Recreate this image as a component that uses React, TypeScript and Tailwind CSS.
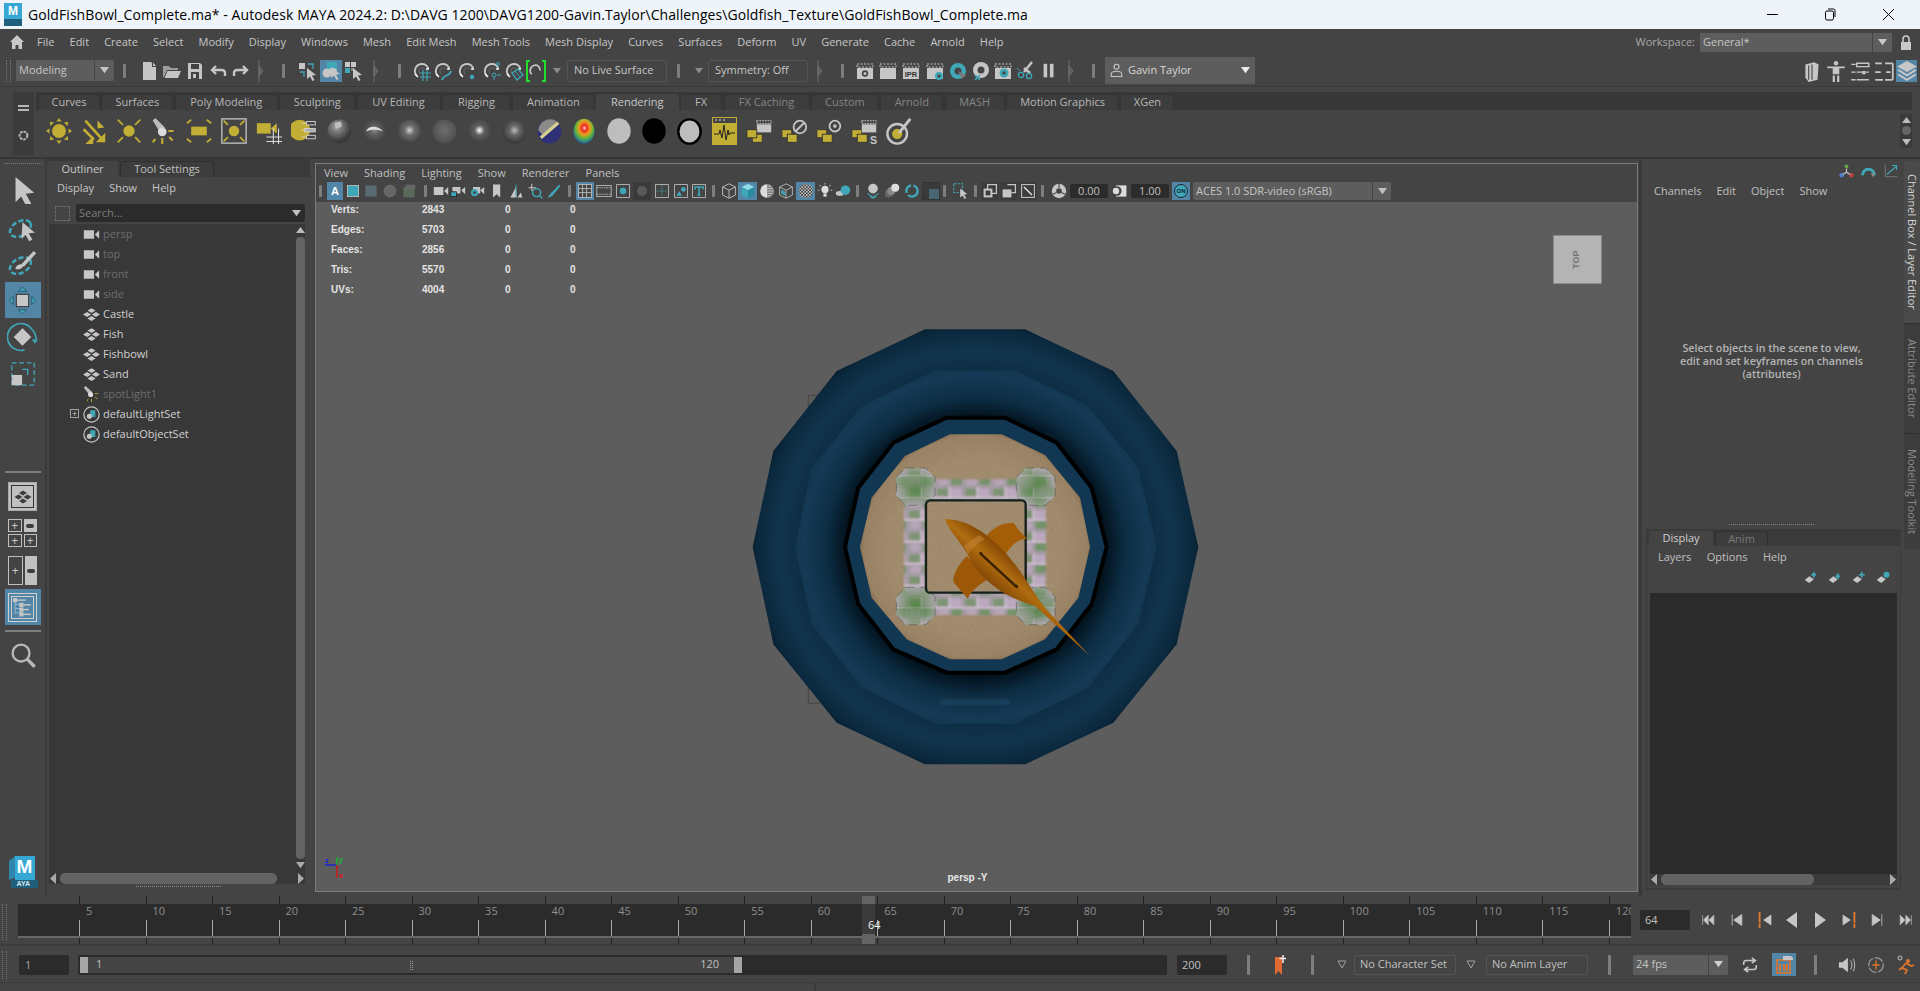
import React from "react";

const G = "#c6c6c6", T = "#3fa7b8", Y = "#c2ae35", D = "#444444";

function I({ s = 18, w, h, vb = "0 0 20 20", children }: { s?: number; w?: number; h?: number; vb?: string; children?: React.ReactNode }) {
  return <svg width={w ?? s} height={h ?? s} viewBox={vb} className="block shrink-0">{children}</svg>;
}
function Slot({ className = "", children }: { className?: string; children?: React.ReactNode }) {
  return <div className={`flex items-center justify-center shrink-0 h-full ${className}`}>{children}</div>;
}
function Handle({ h = "h-[14px]" }: { h?: string }) {
  return <div className={`w-[3px] ${h} bg-[#7e7e7e] rounded-[1px]`} />;
}
function Tri() {
  return <svg width="6" height="22" viewBox="0 0 6 22"><path d="M1 0 V22 M1 6 L5 11 L1 16Z" stroke="#6e6e6e" fill="#5e5e5e" strokeWidth="1" /></svg>;
}
function Down({ c = G, s = 9 }: { c?: string; s?: number }) {
  return <svg width={s} height={s * 0.7} viewBox="0 0 10 7" className="block shrink-0"><path d="M0 0H10L5 7Z" fill={c} /></svg>;
}
function Grip({ className = "" }: { className?: string }) {
  return <div className={`w-[5px] border-l border-r border-dotted border-[#777] ${className}`} />;
}

/* ---------- top toolbar icons ---------- */
const NewFile = () => <I s={20}><path d="M4 1h8l1 1v4h4v13H4z" fill={G} /><path d="M14 1.5 17 5h-3z" fill={G} /></I>;
const OpenFolder = () => <I s={20}><path d="M1 5h6l2 2h7v2H5L2 16H1z" fill="#9c9c9c" /><path d="M5.5 10H19l-3 7H2.5z" fill={G} /></I>;
const Save = () => <I s={20}><path d="M3 2h12l2 2v14H3z" fill={G} /><rect x="6" y="3" width="8" height="5" fill={D} /><rect x="6" y="11" width="8" height="7" fill={D} /><rect x="8" y="13" width="3" height="4" fill={G} /></I>;
const Undo = () => <I s={20}><path d="M17 15v-3a3 3 0 0 0-3-3H4M8 5 4 9l4 4" stroke={G} strokeWidth="2.4" fill="none" /></I>;
const Redo = () => <I s={20}><path d="M3 15v-3a3 3 0 0 1 3-3h10M12 5l4 4-4 4" stroke={G} strokeWidth="2.4" fill="none" /></I>;
const Arrow = ({ x = 8, y = 6, c = G }: { x?: number; y?: number; c?: string }) => <path transform={`translate(${x} ${y})`} d="M0 0 9 7 5 7.5 7.5 12 5.5 13 3 8.5 0 11Z" fill={c} />;
const SelHier = () => <I s={20}><rect x="1" y="2" width="6" height="6" fill={G} /><path d="M10 3h5v5M2 11h4v5" stroke={T} strokeWidth="1.3" fill="none" /><Arrow x={9} y={7} /></I>;
const SelObj = () => <I s={20}><rect x="6" y="1" width="10" height="9" fill={T} /><circle cx="6" cy="12" r="4.5" fill={G} /><circle cx="12" cy="11" r="4" fill={G} /><Arrow x={10} y={6} /></I>;
const SelComp = () => <I s={20}><rect x="1" y="1" width="5" height="5" fill={G} /><rect x="7" y="1" width="5" height="5" fill={G} /><rect x="1" y="7" width="5" height="5" fill={T} /><rect x="7" y="7" width="3" height="3" fill="#888" /><Arrow x={9} y={7} /></I>;
const Magnet = ({ children }: { children?: React.ReactNode }) => <I s={20}><path d="M5 15C1 11 3 4 9 3c4-.5 7 2 7 5" stroke={G} strokeWidth="1.900" fill="none" /><path d="M8 13C6 10 7 7 10 7c2 0 3 1 3 2" stroke="#6a6a6a" strokeWidth="1" fill="none" /><path d="M3 13l3 3M14 8h3" stroke="#eee" strokeWidth="1.5" />{children}</I>;
const SnapGrid = () => <Magnet><path d="M8 12h11M8 16h11M11 9v11M15 9v11" stroke={T} strokeWidth="1.2" /></Magnet>;
const SnapCurve = () => <Magnet><path d="M9 19c1-6 8-3 9-9" stroke={T} strokeWidth="1.8" fill="none" /></Magnet>;
const SnapPoint = () => <Magnet><circle cx="15" cy="16" r="2.2" fill={T} /></Magnet>;
const SnapView = () => <Magnet><circle cx="16" cy="3" r="1.5" fill="none" stroke={T} /><circle cx="12" cy="14" r="2" fill="none" stroke={T} /><path d="M15 14h4M12 16v3" stroke={T} /></Magnet>;
const SnapPlane = () => <Magnet><path d="M8 12l6-4 5 6-6 5z" fill="none" stroke={T} strokeWidth="1.3" /><path d="M11 10l5 6" stroke={T} /></Magnet>;
const SnapLive = () => <div className="relative w-[20px] h-[22px] flex items-center justify-center">
  <div className="absolute left-0 top-0 bottom-0 w-[4px] border-l-2 border-t-2 border-b-2 border-[#22e02a]" />
  <div className="absolute right-0 top-0 bottom-0 w-[4px] border-r-2 border-t-2 border-b-2 border-[#22e02a]" />
  <I s={15}><path d="M5 15C1 11 3 4 9 3c4-.5 7 2 7 7" stroke={G} strokeWidth="2.2" fill="none" /></I>
</div>;
const Clap = ({ children }: { children?: React.ReactNode }) => <I s={20}><rect x="2" y="3" width="16" height="3" fill="none" stroke={G} strokeDasharray="2 1.5" /><rect x="2" y="7" width="16" height="11" fill={G} />{children}</I>;
const Rec = () => <Clap><circle cx="10" cy="12.5" r="3.2" fill={D} /><circle cx="10" cy="12.5" r="1.5" fill={G} /></Clap>;
const Render2 = () => <Clap />;
const IPR = () => <Clap><text x="10" y="16" textAnchor="middle" fontSize="7.5" fontWeight="700" fill="#333" fontFamily="Liberation Sans">IPR</text></Clap>;
const RenderGear = () => <Clap><circle cx="14" cy="15" r="4" fill={T} /><circle cx="14" cy="15" r="1.5" fill={D} /></Clap>;
const Hyper = () => <I s={20}><circle cx="10" cy="10" r="8" fill={T} /><circle cx="10" cy="10" r="3.5" fill={D} /><path d="M10 10 18 14 14 18Z" fill="#777" /></I>;
const Disc = () => <I s={20}><circle cx="10" cy="9" r="8" fill={G} /><circle cx="10" cy="9" r="3.5" fill={D} /><path d="M4 14l5 5M9 14l-5 5" stroke={T} strokeWidth="1.7" /></I>;
const ClapGear = () => <Clap><circle cx="11" cy="12" r="4.5" fill={T} /><circle cx="11" cy="12" r="1.7" fill={D} /></Clap>;
const Cut = () => <I s={20}><path d="M16 1 8 11M14 12l-6-5" stroke={G} strokeWidth="2.4" /><circle cx="5" cy="14" r="2.6" fill="none" stroke={T} strokeWidth="1.3" /><circle cx="13" cy="15" r="2.6" fill="none" stroke={T} strokeWidth="1.3" /><path d="M1 7l3 3" stroke={T} /></I>;
const Pause = () => <I s={18}><rect x="4" y="2" width="4" height="15" fill={G} /><rect x="11" y="2" width="4" height="15" fill={G} /></I>;
const User = () => <I s={15}><circle cx="10" cy="5" r="3.3" fill="none" stroke={G} strokeWidth="1.5" /><path d="M3 18v-3c0-3 3-4 7-4s7 1 7 4v3z" fill="none" stroke={G} strokeWidth="1.5" /></I>;
const ModIcon = () => <I s={22}><path d="M4 4l8-2 4 2-1 14-8 2-3-4z" fill={G} /><path d="M7 5v13M10 4v14" stroke={D} strokeWidth="1" /></I>;
const Person = () => <I s={22}><circle cx="10" cy="3" r="2" fill={G} /><path d="M2 6h16v1.6h-5V13h-6V7.6H2zM7 14h2v7H7zM11 14h2v7h-2z" fill={G} /></I>;
const ListA = () => <I s={22}><path d="M7 3h11v3H7zM2 4h4M7 11h5M15 11h3M2 11h4M7 18h11M2 18h4" stroke={G} fill="none" strokeWidth="1.3" /><rect x="12" y="10" width="3" height="3" fill={G} /></I>;
const ListB = () => <I s={22}><path d="M2 3h6M11 3h7M18 3v15M2 11h5M2 18h7M12 11h4M11 18h7" stroke={G} strokeWidth="1.6" fill="none" /></I>;
const Layers = () => <I s={22}><path d="M10 1 19 6 10 11 1 6Z" fill={G} /><path d="M2 9l8 5 8-5M2 13l8 5 8-5" stroke={G} strokeWidth="1.8" fill="none" /></I>;

/* ---------- shelf icons ---------- */
const LightRays = ({ cx = 15, cy = 15, l = 6, r = 8 }: { cx?: number; cy?: number; l?: number; r?: number }) => {
  const d = r + 2;
  return <path d={`M${cx - d} ${cy - d}l${-l} ${-l}M${cx + d} ${cy - d}l${l} ${-l}M${cx - d} ${cy + d}l${-l} ${l}M${cx + d} ${cy + d}l${l} ${l}`} stroke={Y} strokeWidth="2" />;
};
const Sh = ({ children }: { children?: React.ReactNode }) => <I s={26} vb="0 0 30 30">{children}</I>;
const Ambient = () => <Sh><circle cx="15" cy="15" r="8" fill={Y} />{[0, 45, 90, 135, 180, 225, 270, 315].map((a) => <path key={a} d="M15 0l3 4h-6z" fill={Y} transform={`rotate(${a} 15 15)`} />)}</Sh>;
const Direct = () => <Sh><path d="M5 3 24 24M3 13l12 12" stroke={Y} strokeWidth="3" /><path d="M28 28H17l11-11zM19 3v9l8-1z" fill={Y} /><path d="M14 30H5l9-9z" fill={Y} /></Sh>;
const PointL = () => <Sh><circle cx="15" cy="15" r="6.5" fill={Y} /><LightRays l={6} r={5} /></Sh>;
const Spot = () => <Sh><path d="M2 3 5 0 16 11l-6 5z" fill="#bcbcbc" /><circle cx="13" cy="16" r="5" fill="#dcdcdc" /><path d="M20 15h6M13 23v7M5 24l-3 4M21 22l4 4" stroke={Y} strokeWidth="2.4" /></Sh>;
const AreaL = () => <Sh><rect x="6" y="10" width="18" height="10" fill={Y} /><path d="M1 6l5-4M29 6l-5-4M1 24l5 4M29 24l-5 4" stroke={Y} strokeWidth="2" /></Sh>;
const Volume = () => <Sh><rect x="1" y="1" width="28" height="28" fill="none" stroke="#cfcfcf" strokeWidth="1.4" /><circle cx="15" cy="15" r="6" fill={Y} /><LightRays l={5} r={5} /></Sh>;
const CamLight = () => <Sh><rect x="1" y="6" width="16" height="12" fill={Y} /><path d="M17 12 24 6V18Z" fill={Y} /><path d="M12 22h19M12 27h19M20 12v18M26 12v18" stroke="#ddd" strokeWidth="1.2" /></Sh>;
const LightEd = () => <Sh><circle cx="10" cy="14" r="12" fill={Y} /><path d="M12 6h5M12 14h4M12 22h5" stroke="#ddd" /><rect x="18" y="4" width="10" height="4" fill={D} stroke="#ddd" /><rect x="16" y="12" width="12" height="4" fill="#aaa" stroke="#ddd" /><rect x="18" y="20" width="10" height="4" fill={D} stroke="#ddd" /></Sh>;
function Sphere({ id, hi, lo = "#3a3a3a", mid = "#707070", fx = 50, fy = 45, children }: { id: string; hi: string; lo?: string; mid?: string; fx?: number; fy?: number; children?: React.ReactNode }) {
  return <I s={25}><defs><radialGradient id={id} cx={`${fx}%`} cy={`${fy}%`} r="60%"><stop offset="0" stopColor={hi} /><stop offset=".35" stopColor={mid} /><stop offset="1" stopColor={lo} /></radialGradient></defs><circle cx="10" cy="10" r="9.6" fill={`url(#${id})`} />{children}</I>;
}
const HeatMap = () => <I s={26}><defs><radialGradient id="hm" cx="52%" cy="38%" r="62%"><stop offset="0" stopColor="#ffe0d0" /><stop offset=".18" stopColor="#ee2a25" /><stop offset=".45" stopColor="#e8a020" /><stop offset=".68" stopColor="#5cb53a" /><stop offset="1" stopColor="#1a6cb0" /></radialGradient></defs><ellipse cx="10" cy="10" rx="8" ry="9.5" fill="url(#hm)" /></I>;
const Wave = () => <I w={25} h={28} vb="0 0 25 28"><rect x="0" y="0" width="25" height="28" fill={Y} /><rect x="1" y="1" width="23" height="5" fill={D} /><path d="M3 3h2M7 3h2M11 3h2" stroke="#ddd" /><path d="M2 17h5l1-4 2 8 2-13 2 15 2-10 1 5 1-2h5" stroke="#222" fill="none" /></I>;
const Stack = ({ children }: { children?: React.ReactNode }) => <I s={27} vb="0 0 30 30"><rect x="1" y="13" width="11" height="9" fill={Y} stroke="#333" /><rect x="7" y="18" width="11" height="9" fill={Y} stroke="#333" />{children}</I>;
const Batch = () => <Stack><rect x="12" y="3" width="16" height="3" fill="none" stroke={G} strokeDasharray="2 1" /><rect x="12" y="7" width="16" height="9" fill={G} /><rect x="1" y="13" width="11" height="9" fill={Y} stroke="#333" /></Stack>;
const BatchStop = () => <Stack><circle cx="21" cy="10" r="7" fill="none" stroke={G} strokeWidth="2" /><path d="M16 15l10-10" stroke={G} strokeWidth="2" /></Stack>;
const BatchCam = () => <Stack><circle cx="21" cy="9" r="6" fill="none" stroke={G} strokeWidth="2" /><circle cx="21" cy="9" r="2" fill={G} /></Stack>;
const BatchS = () => <Stack><rect x="12" y="3" width="16" height="3" fill="none" stroke={G} strokeDasharray="2 1" /><rect x="12" y="7" width="16" height="9" fill={G} /><text x="25" y="29" fontSize="12" textAnchor="middle" fontWeight="700" fill={G} fontFamily="Liberation Sans">S</text></Stack>;
const PaintTarget = () => <I s={28} vb="0 0 30 30"><circle cx="12" cy="18" r="10.5" fill="none" stroke={G} strokeWidth="2.6" /><circle cx="12" cy="18" r="5.5" fill={Y} /><path d="M14 17 26 2" stroke={G} strokeWidth="3.2" /></I>;

/* ---------- toolbox ---------- */
const Lasso = ({ brush = false }: { brush?: boolean }) => <I s={31} vb="0 0 30 30"><ellipse cx="13" cy="17" rx="11" ry="7" transform="rotate(-30 13 17)" fill="none" stroke={T} strokeWidth="2.4" strokeDasharray="5 2.4" />{brush ? <><path d="M15 17 27 4" stroke={G} strokeWidth="3.4" /><path d="M8 20c1-4 5-5 8-4 0 3-4 6-8 4z" fill={G} /></> : <path d="M15 11l12 10-6 .6 3.5 6-3 1.6-3.5-6-4 4z" fill={G} />}</I>;
const Move = () => <I s={31} vb="0 0 30 30"><rect x="9" y="9" width="12" height="12" fill={G} stroke="#333" /><path d="M15 2l4 4h-8zM15 28l4-4h-8zM2 15l4-4v8zM28 15l-4-4v8z" fill={T} stroke="#234" strokeWidth=".6" /></I>;
const Rotate = () => <I s={31} vb="0 0 30 30"><path d="M24 7A13 13 0 1 0 17 27" fill="none" stroke={T} strokeWidth="1.6" /><path d="M24 7a13 13 0 0 1 4 10" stroke={T} strokeWidth="1.6" fill="none" /><path d="M24 17h6l-3 4z" fill={T} /><path d="M15 6l8.5 8.5L15 23 6.5 14.5z" fill={G} /></I>;
const Scale = () => <I s={28} vb="0 0 30 30"><rect x="3" y="3" width="24" height="24" fill="none" stroke={T} strokeWidth="1.4" strokeDasharray="5 3" /><rect x="3" y="16" width="11" height="11" fill={G} /><path d="M14 10h6v6" stroke={T} strokeWidth="1.5" fill="none" /></I>;
const Dia = ({ x, y, s = 1 }: { x: number; y: number; s?: number }) => <g transform={`translate(${x} ${y}) scale(${s})`} fill="#3c3c3c"><path d="M0-3 5 0 0 3-5 0z" /></g>;
const Diamonds = ({ s = 18, c = G }: { s?: number; c?: string }) => <I s={s}><path d="M10 2.500l4.800 2.800-4.800 2.800-4.800-2.800zM10 11.900l4.800 2.800-4.800 2.800-4.800-2.800zM4.800 7.200l4.800 2.800-4.800 2.800L0 10zM15.200 7.200 20 10l-4.800 2.800-4.800-2.800z" fill={c} /></I>;
const Cam = ({ s = 17 }: { s?: number }) => <I s={s}><rect x="1" y="5" width="12" height="10" fill={G} /><path d="M14 10 19 5v10z" fill={G} /></I>;
const SetIcon = () => <I s={17}><circle cx="10" cy="10" r="9" fill="none" stroke={G} strokeWidth="1.4" /><rect x="8.5" y="5" width="6" height="8" fill={T} /><circle cx="7.5" cy="12" r="3" fill={G} /></I>;
const SpotSm = () => <I s={17}><path d="M1 2 3 0l8 7-3 4z" fill="#bdbdbd" /><circle cx="9" cy="10" r="3" fill="#ddd" /><path d="M14 9h4M10 15v4M6 15l-1 3M14 13l3 2" stroke={Y} strokeWidth="1" /></I>;
const MayaLogo = () => (
  <div className="relative w-[31px] h-[32px]">
    <svg width="31" height="32" viewBox="0 0 31 32" className="absolute inset-0"><path d="M1 5 7 0v22l-6 2z" fill="#2e86ad" /><path d="M7 0H27v24H7z" fill="#37a7d4" /><path d="M3 24H30V32H3z" fill="#1f5f7c" /></svg>
    <span className="absolute left-[9px] top-[1px] text-[19px] leading-[20px] font-bold text-white font-['Liberation_Sans',sans-serif]">M</span>
    <span className="absolute left-[9px] top-[23px] text-[7px] leading-[9px] font-bold text-[#d8e8ee] font-['Liberation_Sans',sans-serif]">AYA</span>
  </div>
);

/* ---------- viewport toolbar ---------- */
const V = ({ children }: { children?: React.ReactNode }) => <I s={16}>{children}</I>;
const Blue = ({ children, className = "" }: { children?: React.ReactNode; className?: string }) => <div className={`h-[18px] flex items-center justify-center bg-[#5285a6] ${className}`}>{children}</div>;
const VCamLock = () => <V><rect x="3" y="5" width="10" height="8" fill={G} /><path d="M14 9l5-4v9z" fill={G} /><rect x="1" y="11" width="7" height="6" fill={T} stroke="#222" /></V>;
const VCamGear = () => <V><rect x="5" y="5" width="9" height="8" fill={G} /><path d="M14 9l5-4v9z" fill={G} /><circle cx="7" cy="12" r="4.5" fill={T} /><circle cx="7" cy="12" r="1.8" fill={D} /></V>;
const VBook = () => <V><path d="M5 2h9v16l-4.500-4L5 18z" fill={G} /></V>;
const VPlane = () => <V><path d="M3 18 10 5l1 13zM12 18l4-6 2 6z" fill={G} /><path d="M10 2v16" stroke={T} strokeWidth="1.2" /></V>;
const VZoom = () => <V><circle cx="12" cy="12" r="5" fill="none" stroke={T} strokeWidth="1.8" /><path d="M16 16l3 3" stroke={T} strokeWidth="2" /><path d="M6 1v9M2 6h9" stroke={G} strokeWidth="1.3" /></V>;
const VBrush = () => <V><path d="M18 2 7 13l-4 5c3 0 6-1 7-3L19 4z" fill={T} /></V>;
const VGrid = () => <V><rect x="2" y="2" width="16" height="16" fill={D} stroke={G} /><path d="M2 7h16M2 12h16M7 2v16M12 2v16" stroke={G} /></V>;
const VFilm = () => <V><rect x="1" y="3" width="18" height="14" fill="none" stroke={G} /><path d="M1 6h18M1 14h18" stroke={G} strokeDasharray="2 1" /></V>;
const VDot = () => <V><rect x="2" y="2" width="16" height="16" fill="none" stroke={G} /><circle cx="10" cy="10" r="4" fill={T} /></V>;
const VCross = () => <V><rect x="2" y="2" width="16" height="16" fill="none" stroke={G} /><path d="M10 3v14M3 10h14" stroke={T} strokeDasharray="2 1.5" /></V>;
const VMount = () => <V><rect x="2" y="2" width="16" height="16" fill="none" stroke={G} /><path d="M4 16l4-6 3 6z" fill={T} /><circle cx="13" cy="8" r="3" fill={T} /></V>;
const VT = () => <V><rect x="2" y="2" width="16" height="16" fill="none" stroke={G} /><path d="M5 8V5h10v3M10 5v10M8 15h4" stroke={T} strokeWidth="2" fill="none" /></V>;
const VWire = () => <V><path d="M10 1 18 5v10l-8 4-8-4V5zM2 5l8 4 8-4M10 9v10" fill="none" stroke={G} strokeWidth="1.1" /></V>;
const VShade = () => <V><path d="M10 1 18 5l-8 4-8-4z" fill="#8fdbe4" /><path d="M2 5l8 4v10l-8-4z" fill={T} /><path d="M18 5l-8 4v10l8-4z" fill="#2a8c9c" /></V>;
const VHalf = () => <V><circle cx="10" cy="10" r="8.500" fill="#dedede" /><path d="M10 1.500a8.500 8.500 0 0 1 0 17z" fill="#777" /><path d="M10 4h5M10 7h7M10 10h8M10 13h7M10 16h5" stroke="#ddd" /></V>;
const VTexCube = () => <V><path d="M10 1 18 5v10l-8 4-8-4V5zM2 5l8 4 8-4M10 9v10" fill="none" stroke={G} /><path d="M4 8l5 3v5l-5-3z" fill={T} /></V>;
const VChecker = () => <V><defs><pattern id="chk" width="4" height="4" patternUnits="userSpaceOnUse"><rect width="4" height="4" fill="#333" /><rect width="2" height="2" fill="#ccc" /><rect x="2" y="2" width="2" height="2" fill="#ccc" /></pattern></defs><circle cx="10" cy="10" r="9" fill="url(#chk)" /></V>;
const VBulb = () => <V><circle cx="10" cy="8" r="4.500" fill="#ddd" /><rect x="8" y="13" width="4" height="4" fill="#ddd" /><path d="M10 0v2M3 3l2 1M17 3l-2 1M1 9h2M17 9h2" stroke="#ddd" /></V>;
const VShadow = () => <V><ellipse cx="6" cy="13" rx="5" ry="3" fill={G} /><circle cx="13" cy="9" r="6" fill={T} /></V>;
const VBall = () => <V><circle cx="10" cy="7" r="6" fill={G} /><path d="M3 13l7 5 7-5M6 17l4 2 4-2" stroke={T} strokeWidth="1.3" fill="none" /></V>;
const VGhost = () => <V><circle cx="6" cy="13" r="5" fill="#666" /><circle cx="9" cy="10" r="5" fill="#888" /><circle cx="14" cy="6" r="5" fill="#ddd" /></V>;
const VRing = () => <V><circle cx="10" cy="10" r="7" fill="none" stroke={T} strokeWidth="3" strokeDasharray="16 3 12 3" /></V>;
const VGhostBox = () => <div className="w-[18px] h-[18px] bg-[#3a3a3a] border border-[#333] flex items-end justify-end"><div className="w-[10px] h-[10px] bg-[#486770]" /></div>;
const VSel = () => <V><rect x="1" y="1" width="11" height="11" fill="none" stroke={T} strokeWidth="1.300" strokeDasharray="3 1.500" /><Arrow x={9} y={7} /></V>;
const VIso = () => <div className="w-[18px] h-[18px] bg-[#3c3c3c] flex items-center justify-center"><V><rect x="7" y="2" width="11" height="11" fill="none" stroke={G} strokeWidth="1.6" /><rect x="2" y="7" width="11" height="11" fill={G} /><rect x="4.500" y="9.500" width="6" height="6" fill="#3c3c3c" /></V></div>;
const VIso2 = () => <div className="w-[18px] h-[18px] bg-[#3c3c3c] flex items-center justify-center"><V><path d="M8 2h10v10h-5" fill="none" stroke={G} strokeWidth="1.600" /><rect x="2" y="8" width="11" height="10" fill={G} /></V></div>;
const VIso3 = () => <div className="w-[18px] h-[18px] bg-[#3c3c3c] flex items-center justify-center"><V><rect x="2" y="2" width="16" height="16" fill="none" stroke={G} strokeWidth="1.300" /><path d="M5 5l10 10" stroke="#ddd" strokeWidth="2" /></V></div>;
const Aperture = () => <V><circle cx="10" cy="10" r="9" fill={G} /><circle cx="10" cy="10" r="3.500" fill={D} /><path d="M10 1v5M2 14l5-2M18 14l-5-2" stroke={D} strokeWidth="1.400" /></V>;
const HalfC = () => <V><rect x="5" y="3" width="13" height="14" fill="#ddd" /><circle cx="6" cy="10" r="6" fill={D} /><circle cx="5" cy="10" r="4" fill="#ddd" /></V>;

function Txt({ className = "", children }: { className?: string; children?: React.ReactNode }) {
  return <span className={`whitespace-nowrap ${className}`}>{children}</span>;
}

const menus = ["File", "Edit", "Create", "Select", "Modify", "Display", "Windows", "Mesh", "Edit Mesh", "Mesh Tools", "Mesh Display", "Curves", "Surfaces", "Deform", "UV", "Generate", "Cache", "Arnold", "Help"];

function TitleBar() {
  return (
    <div className="h-[29px] bg-[#eff4fb] flex items-center shrink-0 text-black">
      <div className="ml-[4px] w-[18px] h-[24px] flex flex-col shrink-0">
        <div className="h-[16px] bg-[#37a7d4] text-white text-[12px] leading-[16px] font-bold text-center font-['Liberation_Sans',sans-serif]">M</div>
        <div className="h-[7px] bg-[#1f5f7c]" />
      </div>
      <span className="ml-[6px] text-[14px] leading-[29px] whitespace-nowrap font-['Open_Sans',sans-serif] tracking-[0.07px]">GoldFishBowl_Complete.ma* - Autodesk MAYA 2024.2: D:\DAVG 1200\DAVG1200-Gavin.Taylor\Challenges\Goldfish_Texture\GoldFishBowl_Complete.ma</span>
      <div className="ml-auto mr-[3px] flex items-center h-full">
        <Slot className="w-[58px]"><div className="w-[11px] h-[1px] bg-black" /></Slot>
        <Slot className="w-[58px]"><svg width="12" height="13" viewBox="0 0 12 13"><rect x="1.500" y="3" width="8" height="9" rx="1.500" fill="none" stroke="#000" /><path d="M4 1h5.500a1.500 1.500 0 0 1 1.500 1.500V9" fill="none" stroke="#000" /></svg></Slot>
        <Slot className="w-[58px]"><svg width="13" height="13" viewBox="0 0 13 13"><path d="M1 1l11 11M12 1 1 12" stroke="#000" /></svg></Slot>
      </div>
    </div>
  );
}

function MenuBar() {
  return (
    <div className="h-[26px] flex items-center shrink-0 relative">
      <Slot className="w-[32px] pl-[2px]"><svg width="16" height="16" viewBox="0 0 16 16"><path d="M8 1 15 8h-2v7H9.500v-4h-3v4H3V8H1z" fill="#c8c8c8" /></svg></Slot>
      <div className="ml-[5px] flex gap-[15.100px] text-[11px] text-[#c6c6c6]">
        {menus.map((m) => <Txt key={m}>{m}</Txt>)}
      </div>
      <div className="ml-auto flex items-center h-full">
        <Txt className="text-[11px] text-[#a8a8a8] mr-[5px]">Workspace:</Txt>
        <div className="w-[172px] h-[19px] bg-[#5d5d5d] flex items-center px-[3px] text-[11px] text-[#c6c6c6]">General*</div>
        <div className="w-[19px] h-[19px] ml-[1px] bg-[#5d5d5d] flex items-center justify-center"><Down c="#c8c8c8" /></div>
        <Slot className="w-[28px]"><svg width="14" height="17" viewBox="0 0 14 17"><path d="M4 8V5a3 3 0 0 1 6 0v3" stroke="#c8c8c8" strokeWidth="1.600" fill="none" /><rect x="2" y="8" width="10" height="8" fill="#c8c8c8" /></svg></Slot>
      </div>
    </div>
  );
}

function Field({ className = "", children }: { className?: string; children?: React.ReactNode }) {
  return <div className={`h-[22px] rounded-[3px] border border-[#555] flex items-center pl-[6px] text-[11px] text-[#c6c6c6] shrink-0 ${className}`}>{children}</div>;
}

function Toolbar() {
  return (
    <div className="h-[32px] flex items-center shrink-0 border-b border-[#3a3a3a]">
      <Grip className="ml-[6px] mr-[3px] h-[22px] w-[3px]" />
      <div className="w-[98px] h-[21px] ml-[2px] bg-[#5d5d5d] rounded-[2px] flex items-center text-[11px] text-[#c6c6c6] shrink-0">
        <span className="pl-[3px] flex-1">Modeling</span>
        <div className="w-[20px] h-full border-l border-[#444] flex items-center justify-center"><Down /></div>
      </div>
      <Slot className="w-[20px]"><Handle /></Slot>
      <div className="w-[3px] shrink-0" />
      {[NewFile, OpenFolder, Save, Undo, Redo].map((C, i) => <Slot key={i} className="w-[23px]"><C /></Slot>)}
      <Slot className="w-[18px]"><Tri /></Slot>
      <Slot className="w-[26px]"><Handle /></Slot>
      <Slot className="w-[23px]"><SelHier /></Slot>
      <Slot className="w-[23px]"><div className="w-[22px] h-[22px] bg-[#5285a6] flex items-center justify-center"><SelObj /></div></Slot>
      <Slot className="w-[23px]"><SelComp /></Slot>
      <Slot className="w-[22px]"><Tri /></Slot>
      <Slot className="w-[24px]"><Handle /></Slot>
      <Slot className="w-[21px]"><SnapGrid /></Slot>
      <Slot className="w-[22px]"><SnapCurve /></Slot>
      <Slot className="w-[26px]"><SnapPoint /></Slot>
      <Slot className="w-[24px]"><SnapView /></Slot>
      <Slot className="w-[20px]"><SnapPlane /></Slot>
      <Slot className="w-[23px]"><SnapLive /></Slot>
      <Slot className="w-[20px]"><Down c="#8a8a8a" s={8} /></Slot>
      <Field className="w-[100px]">No Live Surface</Field>
      <Slot className="w-[22px]"><Handle /></Slot>
      <Slot className="w-[19px]"><Down c="#8a8a8a" s={8} /></Slot>
      <Field className="w-[100px]">Symmetry: Off</Field>
      <Slot className="w-[24px]"><Tri /></Slot>
      <Slot className="w-[20px]"><Handle /></Slot>
      <div className="w-[1px] shrink-0" />
      <Slot className="w-[23px]"><Rec /></Slot>
      <Slot className="w-[23px]"><Render2 /></Slot>
      <Slot className="w-[23px]"><IPR /></Slot>
      <Slot className="w-[25px]"><RenderGear /></Slot>
      <Slot className="w-[22px]"><Hyper /></Slot>
      <Slot className="w-[23px]"><Disc /></Slot>
      <Slot className="w-[22px]"><ClapGear /></Slot>
      <Slot className="w-[24px]"><Cut /></Slot>
      <Slot className="w-[22px]"><Pause /></Slot>
      <Slot className="w-[22px]"><Tri /></Slot>
      <Slot className="w-[22px]"><Handle /></Slot>
      <div className="w-[150px] h-[27px] ml-[1px] bg-[#5d5d5d] flex items-center shrink-0 text-[11px] text-[#d8d8d8]">
        <span className="ml-[4px]"><User /></span>
        <span className="ml-[4px] flex-1">Gavin Taylor</span>
        <span className="mr-[5px]"><Down c="#eee" /></span>
      </div>
      <div className="ml-auto flex items-center h-full mr-[3px]">
        <Slot className="w-[24px]"><ModIcon /></Slot>
        <Slot className="w-[24px]"><Person /></Slot>
        <Slot className="w-[24px]"><ListA /></Slot>
        <Slot className="w-[24px]"><ListB /></Slot>
        <div className="w-[21px] h-[22px] bg-[#5285a6] flex items-center justify-center"><Layers /></div>
      </div>
    </div>
  );
}

const shelfTabs: [string, string, boolean, boolean][] = [
  ["Curves", "w-[62px]", false, false], ["Surfaces", "w-[72px]", false, false], ["Poly Modeling", "w-[103px]", false, false],
  ["Sculpting", "w-[76px]", false, false], ["UV Editing", "w-[84px]", false, false], ["Rigging", "w-[69px]", false, false],
  ["Animation", "w-[82px]", false, false], ["Rendering", "w-[83px]", true, false], ["FX", "w-[42px]", false, false],
  ["FX Caching", "w-[86px]", false, true], ["Custom", "w-[68px]", false, true], ["Arnold", "w-[63px]", false, true],
  ["MASH", "w-[60px]", false, true], ["Motion Graphics", "w-[113px]", false, false], ["XGen", "w-[54px]", false, false],
];

function Shelf() {
  return (
    <div className="h-[72px] flex shrink-0 pt-[5px] pb-[2px] border-b-2 border-[#363636]">
      <div className="ml-[13px] w-[21px] bg-[#3b3b3b] flex flex-col items-center justify-between py-[13px] shrink-0">
        <div className="w-[11px] h-[6px] border-t-2 border-b-2 border-[#b8b8b8]" />
        <I s={13}><circle cx="10" cy="10" r="6" fill="none" stroke="#bbb" strokeWidth="3" strokeDasharray="4 1.500" /></I>
      </div>
      <div className="ml-[2px] flex-1 flex flex-col mr-[8px]">
        <div className="h-[18px] bg-[#373737] flex items-end pl-[2px] gap-[1.400px] shrink-0">
          {shelfTabs.map(([t, w, act, dim]) => (
            <div key={t} className={`h-[16px] ${w} shrink-0 rounded-t-[3px] flex items-center justify-center text-[11px] ${act ? "bg-[#444444] text-[#c8c8c8]" : dim ? "bg-[#3d3d3d] border-t border-l border-r border-[#333] text-[#858585]" : "bg-[#3d3d3d] border-t border-l border-r border-[#333] text-[#b8b8b8]"}`}>{t}</div>
          ))}
        </div>
        <div className="flex-1 flex items-center pl-[5.500px] pb-[3px]">
          {[Ambient, Direct, PointL, Spot, AreaL, Volume, CamLight, LightEd].map((C, i) => <Slot key={i} className="w-[35px]"><C /></Slot>)}
          <Slot className="w-[35px]"><Sphere id="s1" hi="#a8a8a8" mid="#7c7c7c" fx={38} fy={30}><path d="M6 3l5-1 1 4-5 2z" fill="#c0c0c0" /></Sphere></Slot>
          <Slot className="w-[35px]"><Sphere id="s2" hi="#8a8a8a" mid="#5c5c5c"><path d="M3 10c2-5 10-5 14 0-4-2-10-2-14 0z" fill="#ddd" /></Sphere></Slot>
          <Slot className="w-[35px]"><Sphere id="s3" hi="#d0d0d0" mid="#6c6c6c" /></Slot>
          <Slot className="w-[35px]"><Sphere id="s4" hi="#6c6c6c" mid="#626262" lo="#4a4a4a" /></Slot>
          <Slot className="w-[35px]"><Sphere id="s5" hi="#ffffff" mid="#5e5e5e" /></Slot>
          <Slot className="w-[35px]"><Sphere id="s6" hi="#b8b8b8" mid="#666" lo="#2e2e2e" /></Slot>
          <Slot className="w-[35px]"><I s={25}><circle cx="10" cy="10" r="9.500" fill="#2f2f78" /><path d="M1 9a9.500 9.500 0 0 1 15-7L5 13z" fill="#8a8a8a" /><path d="M3 15 17 3" stroke="#d8d090" strokeWidth="2.600" /></I></Slot>
          <Slot className="w-[35px]"><HeatMap /></Slot>
          <Slot className="w-[35px]"><I s={26}><ellipse cx="10" cy="10" rx="9" ry="9.800" fill="#bdbdbd" /></I></Slot>
          <Slot className="w-[35px]"><I s={26}><ellipse cx="10" cy="10" rx="9" ry="9.800" fill="#000" /></I></Slot>
          <Slot className="w-[35px]"><I s={27}><ellipse cx="10" cy="10" rx="8.300" ry="9" fill="#bdbdbd" stroke="#000" strokeWidth="1.800" /></I></Slot>
          <Slot className="w-[35px]"><Wave /></Slot>
          <Slot className="w-[35px]"><Batch /></Slot>
          <Slot className="w-[35px]"><BatchStop /></Slot>
          <Slot className="w-[35px]"><BatchCam /></Slot>
          <Slot className="w-[35px]"><BatchS /></Slot>
          <Slot className="w-[37px]"><PaintTarget /></Slot>
          <div className="ml-auto w-[12px] h-[34px] bg-[#3a3a3a] flex flex-col items-center justify-between py-[3px]">
            <svg width="9" height="6" viewBox="0 0 9 6"><path d="M0 6h9L4.500 0z" fill="#bbb" /></svg>
            <div className="w-[9px] h-[9px] rounded-full bg-[#666]" />
            <Down c="#bbb" />
          </div>
        </div>
      </div>
    </div>
  );
}

function Toolbox() {
  return (
    <div className="w-[45px] shrink-0 flex flex-col items-center relative">
      <div className="h-[3px] w-[38px] mt-[4px] border-t border-dotted border-[#777]" />
      <div className="h-[36px] mt-[6px] flex items-center"><I s={28} vb="0 0 30 30"><path d="M7 1 27 18l-9 1 6 11-5 3-6-11-6 6z" fill={G} /></I></div>
      <div className="h-[37px] flex items-center"><Lasso /></div>
      <div className="h-[37px] flex items-center"><Lasso brush /></div>
      <div className="h-[36px] w-[36px] bg-[#5285a6] flex items-center justify-center"><Move /></div>
      <div className="h-[38px] flex items-center"><Rotate /></div>
      <div className="h-[36px] flex items-center"><Scale /></div>
      <div className="w-[36px] h-[2px] bg-[#7f7f7f] mt-[79px]" />
      <div className="mt-[9px] w-[29px] h-[29px] bg-[#c0c0c0] border border-[#aaa] flex items-center justify-center"><div className="w-[23px] h-[23px] border border-[#333] flex items-center justify-center"><I s={18} vb="-9 -9 18 18"><Dia x={0} y={-4} s={.8} /><Dia x={0} y={4} s={.8} /><Dia x={-4.500} y={0} s={.8} /><Dia x={4.500} y={0} s={.8} /></I></div></div>
      <div className="mt-[8px] grid grid-cols-2 gap-[2px] w-[29px]">
        {[0, 1, 2, 3].map((i) => i === 1 ? <div key={i} className="h-[13px] bg-[#c0c0c0] flex items-center justify-center"><div className="w-[8px] h-[4px] bg-[#3c3c3c] rounded-full" /></div> : <div key={i} className="h-[13px] border border-[#c0c0c0] flex items-center justify-center text-[#c8c8c8] text-[12px] leading-[10px]">+</div>)}
      </div>
      <div className="mt-[9px] flex gap-[2px] w-[29px] h-[29px]">
        <div className="flex-1 border border-[#c0c0c0] flex items-center justify-center text-[#c8c8c8] text-[12px]">+</div>
        <div className="flex-1 bg-[#c0c0c0] flex items-center justify-center"><div className="w-[8px] h-[4px] bg-[#3c3c3c] rounded-full" /></div>
      </div>
      <div className="mt-[4px] w-[36px] h-[36px] bg-[#5285a6] flex items-center justify-center">
        <div className="w-[29px] h-[29px] border border-[#d0d0d0] p-[2px]"><div className="w-full h-full border border-[#d0d0d0]"><I s={21}><path d="M3 4v12M3 7h6M3 11h6M3 15h6" stroke="#8fb2c8" /><rect x="1" y="1" width="4" height="4" fill={G} /><path d="M5 3h8" stroke={G} strokeWidth="1.400" /><rect x="7" y="5.500" width="4" height="4" fill={G} /><path d="M11 7.500h7" stroke={G} strokeWidth="1.400" /><rect x="7" y="10" width="4" height="4" fill={G} /><path d="M11 12h5" stroke={G} strokeWidth="1.400" /><rect x="7" y="14.500" width="4" height="4" fill={G} /><path d="M11 16.500h7" stroke={G} strokeWidth="1.400" /></I></div></div>
      </div>
      <div className="w-[36px] h-[2px] bg-[#7f7f7f] mt-[5px]" />
      <div className="mt-[10px]"><I s={26}><circle cx="8.500" cy="8.500" r="6.500" fill="none" stroke="#b8b8b8" strokeWidth="1.800" /><path d="M13 13l6 6" stroke="#b8b8b8" strokeWidth="2.600" /></I></div>
      <div className="mt-auto mb-[8px] ml-[1px]"><MayaLogo /></div>
    </div>
  );
}

const outl: [string, "cam" | "mesh" | "spot" | "set", boolean, boolean][] = [
  ["persp", "cam", true, false], ["top", "cam", true, false], ["front", "cam", true, false], ["side", "cam", true, false],
  ["Castle", "mesh", false, false], ["Fish", "mesh", false, false], ["Fishbowl", "mesh", false, false], ["Sand", "mesh", false, false],
  ["spotLight1", "spot", true, false], ["defaultLightSet", "set", false, true], ["defaultObjectSet", "set", false, false],
];

function HScroll({ thumb, className = "" }: { thumb: string; className?: string }) {
  return (
    <div className={`h-[11px] flex items-center shrink-0 ${className}`}>
      <svg width="7" height="11" viewBox="0 0 7 11" className="shrink-0 ml-[1px]"><path d="M6 0V11L0 5.500z" fill="#aaa" /></svg>
      <div className={`h-[11px] ml-[3px] rounded-[5px] bg-[#636363] ${thumb}`} />
      <div className="flex-1" />
      <svg width="7" height="11" viewBox="0 0 7 11" className="shrink-0 mr-[1px]"><path d="M1 0V11L7 5.500z" fill="#aaa" /></svg>
    </div>
  );
}

function Outliner() {
  return (
    <div className="w-[265px] shrink-0 flex flex-col border-l-[2px] border-[#3a3a3a] bg-[#444444]">
      <div className="h-[18px] bg-[#3a3a3a] flex items-end gap-[2px] shrink-0 pt-[2px]">
        <div className="w-[71px] h-[16px] bg-[#444444] rounded-t-[3px] flex items-center justify-center text-[11px] text-[#c8c8c8]">Outliner</div>
        <div className="w-[94px] h-[16px] bg-[#3d3d3d] border-t border-l border-r border-[#2f2f2f] rounded-t-[3px] flex items-center justify-center text-[11px] text-[#c0c0c0]">Tool Settings</div>
      </div>
      <div className="h-[22px] flex items-center gap-[15px] pl-[10px] text-[11px] text-[#c6c6c6] shrink-0">
        <span>Display</span><span>Show</span><span>Help</span>
      </div>
      <div className="h-[20px] mt-[4px] flex items-center shrink-0 pl-[8px] pr-[5px]">
        <div className="w-[15px] h-[15px] border border-dashed border-[#6c6c6c]" />
        <div className="ml-[6px] flex-1 h-[18px] bg-[#2b2b2b] rounded-[2px] flex items-center pl-[3px] pr-[4px] text-[11px] text-[#7d7d7d]">
          <span className="flex-1">Search...</span><Down c="#c0c0c0" />
        </div>
      </div>
      <div className="ml-[2px] mr-[5px] mt-[1px] flex-1 bg-[#383838] flex flex-col min-h-0">
        <div className="flex-1 flex min-h-0">
          <div className="flex-1 flex flex-col">
            {outl.map(([n, k, dim, exp]) => (
              <div key={n} className="h-[20px] flex items-center relative shrink-0">
                {exp && <div className="absolute left-[21px] top-[5px] w-[9px] h-[9px] border border-[#a0a0a0] flex items-center justify-center text-[#c0c0c0] text-[9px] leading-[7px]">+</div>}
                <div className="ml-[34px] w-[17px] flex justify-center">{k === "cam" ? <Cam /> : k === "mesh" ? <Diamonds s={17} /> : k === "spot" ? <SpotSm /> : <SetIcon />}</div>
                <span className={`ml-[3px] text-[11px] whitespace-nowrap ${dim ? "text-[#6e6e6e]" : "text-[#d0d0d0]"}`}>{n}</span>
              </div>
            ))}
          </div>
          <div className="w-[9px] flex flex-col items-center shrink-0 pt-[3px] pb-[5px]">
            <svg width="9" height="6" viewBox="0 0 9 6" className="shrink-0"><path d="M0 6h9L4.500 0z" fill="#bbb" /></svg>
            <div className="w-[9px] flex-1 mt-[4px] mb-[3px] rounded-[4px] bg-[#636363]" />
            <Down c="#aaa" />
          </div>
        </div>
        <HScroll thumb="w-[217px]" />
      </div>
      <div className="h-[12px] flex justify-center items-start pt-[2px] shrink-0"><div className="w-[85px] border-t border-dotted border-[#8a8a8a]" /></div>
    </div>
  );
}

function Model() {
  const c1 = "555,55 855,55 1120,180 1310,420 1375,708 1310,1000 1120,1235 855,1360 555,1360 290,1235 100,1000 38,708 100,420 290,180";
  const c2 = "585,178 825,178 1045,285 1195,470 1250,708 1195,940 1045,1130 825,1238 585,1238 365,1130 215,940 165,708 215,470 365,285";
  const c3 = "620,320 795,320 950,395 1055,530 1100,708 1055,880 950,1015 795,1085 620,1085 460,1015 355,880 315,708 355,530 460,395";
  const c4 = "630,370 785,370 915,432 1020,560 1050,708 1015,860 915,985 785,1045 630,1045 500,985 395,860 360,708 395,560 495,435";
  const tower = (x: number, y: number) => `${x - 30},${y - 56} ${x + 30},${y - 56} ${x + 58},${y - 28} ${x + 58},${y + 28} ${x + 30},${y + 56} ${x - 30},${y + 56} ${x - 58},${y + 28} ${x - 58},${y - 28}`;
  const towers: [number, number][] = [[527, 527], [887, 527], [527, 885], [887, 885]];
  return (
    <svg width="470" height="470" viewBox="0 0 1410 1410" className="block">
      <defs>
        <radialGradient id="r1" gradientUnits="userSpaceOnUse" cx="707" cy="708" r="700"><stop offset=".72" stopColor="#0b2a3f" /><stop offset=".84" stopColor="#11344d" /><stop offset=".93" stopColor="#0b293e" /><stop offset="1" stopColor="#021420" /></radialGradient>
        <radialGradient id="r2" gradientUnits="userSpaceOnUse" cx="707" cy="708" r="560"><stop offset=".68" stopColor="#020f18" /><stop offset=".8" stopColor="#0c2d44" /><stop offset=".92" stopColor="#153a55" /><stop offset="1" stopColor="#11344c" /></radialGradient>
        <radialGradient id="sd" gradientUnits="userSpaceOnUse" cx="707" cy="708" r="370"><stop offset=".7" stopColor="#a58f71" /><stop offset=".9" stopColor="#9c8466" /><stop offset="1" stopColor="#6a5339" /></radialGradient>
        <filter id="nz" x="0" y="0" width="100%" height="100%"><feTurbulence type="fractalNoise" baseFrequency=".35" numOctaves="3" seed="4" /><feColorMatrix values="0 0 0 0 .25 0 0 0 0 .18 0 0 0 0 .1 0 0 0 .9 -.3" /><feComposite in2="SourceAlpha" operator="in" result="n" /><feMerge><feMergeNode in="SourceGraphic" /><feMergeNode in="n" /></feMerge></filter>
        <filter id="bl"><feGaussianBlur stdDeviation="2.500" /></filter>
        <pattern id="stone" width="84" height="66" patternUnits="userSpaceOnUse"><rect width="84" height="66" fill="#a49ba3" /><rect x="4" y="5" width="32" height="24" fill="#7d9472" /><rect x="46" y="5" width="30" height="22" fill="#bca8bf" /><rect x="8" y="38" width="28" height="22" fill="#b7a5b8" /><rect x="46" y="36" width="32" height="24" fill="#74936a" /><path d="M0 32h84M41 0v32" stroke="#d9c5db" strokeWidth="5" /></pattern>
        <radialGradient id="mo"><stop offset="0" stopColor="#437c33" /><stop offset=".55" stopColor="#648d58" /><stop offset="1" stopColor="#9ea39a" /></radialGradient>
        <linearGradient id="fb" gradientUnits="userSpaceOnUse" x1="780" y1="700" x2="700" y2="790"><stop offset="0" stopColor="#7f4403" /><stop offset=".45" stopColor="#b06c10" /><stop offset="1" stopColor="#7a4003" /></linearGradient>
      </defs>
      <path d="M240 253H205V290M240 1177H205V1130" stroke="#444" strokeWidth="3" fill="none" />
      <polygon points={c1} fill="url(#r1)" />
      <polygon points={c2} fill="url(#r2)" />
      <polygon points={c3} fill="#123752" stroke="#000" strokeWidth="12" strokeLinejoin="round" />
      <polygon points={c4} fill="url(#sd)" filter="url(#nz)" />
      <path d="M600 1165h210v18H600z" fill="#1f4a66" opacity=".6" filter="url(#bl)" />
      <path fillRule="evenodd" d="M492 505H918V912H492ZM556 570V843H858V570Z" fill="url(#stone)" filter="url(#bl)" />
      {towers.map(([x, y]) => <g key={x * y}><polygon points={tower(x, y)} fill="url(#mo)" /><polygon points={tower(x, y)} fill="url(#stone)" opacity=".35" stroke="#1e241e" strokeWidth="3" strokeDasharray="26 18" /></g>)}
      <rect x="558" y="568" width="299" height="277" rx="12" fill="none" stroke="#15201a" strokeWidth="7" />
      <path d="M740 672C768 642 795 634 822 636 832 655 848 670 861 683 830 683 812 708 795 732Z" fill="#a45e08" />
      <path d="M680 735C652 765 640 790 640 812 655 830 670 848 683 863 695 838 720 820 748 802Z" fill="#9c5806" />
      <path d="M615 625C680 622 755 670 825 760 860 805 880 845 915 890L1050 1035 885 885C800 860 725 815 680 725 655 685 628 660 615 625Z" fill="url(#fb)" />
      <path d="M672 705C690 690 705 680 718 672L735 685C715 695 695 712 684 730Z" fill="#bf8232" opacity=".6" />
      <path d="M722 727 830 827" stroke="#3c2100" strokeWidth="9" strokeLinecap="round" />
      <path d="M728 727 828 820" stroke="#c98a30" strokeWidth="2" />
    </svg>
  );
}

const stats: [string, string][] = [["Verts:", "2843"], ["Edges:", "5703"], ["Faces:", "2856"], ["Tris:", "5570"], ["UVs:", "4004"]];

function Viewport() {
  return (
    <div className="w-[1323px] shrink-0 ml-[5px] mt-[4px] mb-[4px] border border-[#7c7c7c] flex flex-col relative bg-[#444444]">
      <div className="h-[18px] flex items-center pl-[8px] gap-[16px] text-[11px] text-[#c0c0c0] shrink-0">
        {["View", "Shading", "Lighting", "Show", "Renderer", "Panels"].map((m) => <span key={m}>{m}</span>)}
      </div>
      <div className="h-[18px] flex items-center shrink-0 mb-[2px]">
        <Slot className="w-[8px]"><Handle h="h-[12px]" /></Slot>
        <div className="ml-[3px] w-[16px] h-[18px] bg-[#5285a6] flex items-center justify-center text-white text-[11px] font-bold font-['Liberation_Sans',sans-serif]">A</div>
        <Slot className="w-[19px]"><V><rect x="3" y="3" width="14" height="14" fill={T} stroke={G} /></V></Slot>
        <Slot className="w-[18px]"><V><rect x="3" y="3" width="14" height="14" fill="#5a6a72" /></V></Slot>
        <Slot className="w-[20px]"><V><circle cx="10" cy="10" r="8" fill="#666" /></V></Slot>
        <Slot className="w-[18px]"><V><rect x="3" y="5" width="14" height="13" fill="#5a6a5a" /><rect x="6" y="2" width="12" height="6" fill="#666" /></V></Slot>
        <Slot className="w-[14px]"><Handle h="h-[12px]" /></Slot>
        <Slot className="w-[17px]"><Cam s={16} /></Slot>
        <Slot className="w-[18px]"><VCamLock /></Slot>
        <Slot className="w-[20px]"><VCamGear /></Slot>
        <Slot className="w-[20px]"><VBook /></Slot>
        <Slot className="w-[18px]"><VPlane /></Slot>
        <Slot className="w-[19px]"><VZoom /></Slot>
        <Slot className="w-[18px]"><VBrush /></Slot>
        <Slot className="w-[14px]"><Handle h="h-[12px]" /></Slot>
        <Blue className="w-[18px]"><VGrid /></Blue>
        <Slot className="w-[19px]"><VFilm /></Slot>
        <Slot className="w-[19px]"><VDot /></Slot>
        <Slot className="w-[20px]"><div className="w-[18px] h-[18px] bg-[#3a3a3a] flex items-center justify-center"><div className="w-[10px] h-[10px] rounded-full bg-[#5a5a5a]" /></div></Slot>
        <Slot className="w-[19px]"><VCross /></Slot>
        <Slot className="w-[19px]"><VMount /></Slot>
        <Slot className="w-[18px]"><VT /></Slot>
        <Slot className="w-[10px]"><Handle h="h-[12px]" /></Slot>
        <Slot className="w-[18px] ml-[2px]"><VWire /></Slot>
        <Blue className="w-[19px]"><VShade /></Blue>
        <Slot className="w-[19px]"><VHalf /></Slot>
        <Slot className="w-[20px]"><VTexCube /></Slot>
        <Blue className="w-[19px]"><VChecker /></Blue>
        <Slot className="w-[19px]"><VBulb /></Slot>
        <Slot className="w-[18px]"><VShadow /></Slot>
        <Slot className="w-[10px]"><Handle h="h-[12px]" /></Slot>
        <Slot className="w-[18px] ml-[2px]"><VBall /></Slot>
        <Slot className="w-[20px]"><VGhost /></Slot>
        <Slot className="w-[19px]"><VRing /></Slot>
        <Slot className="w-[20px]"><VGhostBox /></Slot>
        <Slot className="w-[6px]"><Handle h="h-[12px]" /></Slot>
        <Slot className="w-[20px] ml-[4px]"><VSel /></Slot>
        <Slot className="w-[8px]"><Handle h="h-[12px]" /></Slot>
        <Slot className="w-[18px] ml-[2px]"><VIso /></Slot>
        <Slot className="w-[18px] ml-[1px]"><VIso2 /></Slot>
        <Slot className="w-[18px] ml-[1px]"><VIso3 /></Slot>
        <Slot className="w-[10px]"><Handle h="h-[12px]" /></Slot>
        <Slot className="w-[18px] ml-[3px]"><Aperture /></Slot>
        <div className="ml-[2px] w-[38px] h-[14px] bg-[#2b2b2b] rounded-[2px] text-[11px] leading-[14px] text-[#c0c0c0] text-center">0.00</div>
        <Slot className="w-[19px] ml-[2px]"><HalfC /></Slot>
        <div className="ml-[2px] w-[38px] h-[14px] bg-[#2b2b2b] rounded-[2px] text-[11px] leading-[14px] text-[#c0c0c0] text-center">1.00</div>
        <div className="ml-[3px] w-[18px] h-[18px] bg-[#5285a6] flex items-center justify-center"><div className="w-[14px] h-[14px] rounded-full bg-[#3fa7b8] border border-[#223] text-[6px] leading-[12px] text-center text-[#123] font-bold font-['Liberation_Sans',sans-serif]">ON</div></div>
        <div className="ml-[3px] w-[198px] h-[18px] bg-[#5d5d5d] rounded-[2px] flex items-center text-[11px] text-[#c6c6c6]">
          <span className="flex-1 pl-[3px] whitespace-nowrap">ACES 1.0 SDR-video (sRGB)</span>
          <div className="w-[19px] h-full border-l border-[#444] flex items-center justify-center"><Down c="#c0c0c0" /></div>
        </div>
      </div>
      <div className="flex-1 bg-[#5d5d5d] relative flex items-center justify-center overflow-hidden pr-[3px] pb-[2px]">
        <Model />
        <div className="absolute left-[15px] top-[2px] font-['Liberation_Sans',sans-serif] font-bold text-[10px] leading-[12px] text-[#e4e4e4]">
          {stats.map(([l, v]) => (
            <div key={l} className="h-[20px] flex items-start">
              <span className="w-[91px]">{l}</span><span className="w-[83px]">{v}</span><span className="w-[65px]">0</span><span>0</span>
            </div>
          ))}
        </div>
        <div className="absolute right-[35px] top-[33px] w-[49px] h-[49px] bg-[#b4b4b4] border border-[#8a8a8a] flex items-center justify-center"><span className="-rotate-90 text-[9px] font-bold text-[#777] font-['Liberation_Sans',sans-serif]">TOP</span></div>
        <div className="absolute bottom-[6px] left-0 right-0 pr-[18px] text-center text-[10px] font-bold text-[#e8e8e8] font-['Liberation_Sans',sans-serif]">persp -Y</div>
        <div className="absolute left-[6px] bottom-[11px] w-[26px] h-[24px]">
          <svg width="26" height="24" viewBox="0 0 26 24"><path d="M3 9H15" stroke="#1020e0" strokeWidth="1.300" /><path d="M15 9V22" stroke="#e01010" strokeWidth="1.300" /><path d="M15 1V9" stroke="#10c030" strokeWidth="1.300" /><text x="3" y="7" fontSize="7" fontWeight="700" fill="#1020e0" fontFamily="Liberation Sans">z</text><text x="17" y="6" fontSize="7" fontWeight="700" fill="#10c030" fontFamily="Liberation Sans">y</text><text x="17" y="22" fontSize="7" fontWeight="700" fill="#e01010" fontFamily="Liberation Sans">x</text></svg>
        </div>
      </div>
    </div>
  );
}

function RightPanel() {
  return (
    <div className="flex-1 flex min-w-0">
      <div className="w-[3px] bg-[#3a3a3a] ml-[1px] shrink-0" />
      <div className="w-[259px] shrink-0 flex flex-col mt-[2px]">
        <div className="h-[20px] flex items-center justify-end gap-[7px] pr-[3px] shrink-0">
          <I s={15}><circle cx="10" cy="3" r="2.500" fill="#6aa84f" /><circle cx="3.500" cy="15" r="3" fill="#4a7fd0" /><circle cx="16.500" cy="15" r="3" fill="#c04040" /><path d="M10 6v5M5 14l5-3 5 3" stroke={G} strokeWidth="1.500" fill="none" /></I>
          <I s={15}><path d="M2 15a8 8 0 1 1 16 0" fill="none" stroke={T} strokeWidth="4" /><path d="M13 12l6 0-3 6z" fill="#888" /></I>
          <I s={15}><path d="M3 1v16h16" stroke="#888" fill="none" /><path d="M5 14 18 3M12 2h6v6" stroke={T} strokeWidth="1.500" fill="none" /></I>
        </div>
        <div className="h-[21px] flex items-center gap-[15px] pl-[12px] text-[11px] text-[#c0c0c0] shrink-0">
          <span>Channels</span><span>Edit</span><span>Object</span><span>Show</span>
        </div>
        <div className="flex-1 flex flex-col items-center justify-center text-[10.700px] leading-[13px] font-semibold text-[#b4b4b4] text-center">
          <span>Select objects in the scene to view,</span>
          <span>edit and set keyframes on channels</span>
          <span>(attributes)</span>
        </div>
        <div className="h-[9px] flex justify-center items-center shrink-0"><div className="w-[85px] border-t border-dotted border-[#888]" /></div>
        <div className="ml-[4px] flex-col flex h-[361px] shrink-0 mb-[6px] border-b-2 border-l border-r border-[#3a3a3a]">
          <div className="h-[17px] bg-[#3a3a3a] flex items-end gap-[2px] pl-[2px] shrink-0">
            <div className="w-[64px] h-[15px] bg-[#444444] rounded-t-[3px] flex items-center justify-center text-[11px] text-[#d0d0d0]">Display</div>
            <div className="w-[53px] h-[15px] bg-[#3d3d3d] border-t border-l border-r border-[#2f2f2f] rounded-t-[3px] flex items-center justify-center text-[11px] text-[#7a7a7a]">Anim</div>
          </div>
          <div className="h-[23px] flex items-center gap-[15.500px] pl-[11px] text-[11px] text-[#c0c0c0] shrink-0">
            <span>Layers</span><span>Options</span><span>Help</span>
          </div>
          <div className="h-[19px] flex items-center justify-end gap-[9px] pr-[9px] shrink-0">
            {["M13 9V3l-3 3M13 3l3 3", "M13 3v6l-3-3M13 9l3-3", "M13 1v8M9 5h8", "dot"].map((d, i) => (
              <I key={i} s={15}><path d="M1 12l6-5 6 4-6 5z" fill={G} />{d === "dot" ? <circle cx="14" cy="5" r="4" fill={T} /> : <path d={d} stroke={T} strokeWidth="2.200" fill="none" />}</I>
            ))}
          </div>
          <div className="mx-[3px] flex-1 bg-[#2b2b2b] mt-[5px]" />
          <div className="mx-[3px] bg-[#3b3b3b] mb-[3px]"><HScroll thumb="w-[153px]" /></div>
        </div>
      </div>
      <div className="flex-1 flex flex-col mt-[2px] ml-[3px] bg-[#444444]">
        {[["h-[162px]", "bg-[#4a4a4a] text-[#d4d4d4]", "Channel Box / Layer Editor"], ["h-[110px]", "bg-[#3d3d3d] text-[#8a8a8a] border-t border-[#2f2f2f]", "Attribute Editor"], ["h-[116px]", "bg-[#3d3d3d] text-[#8a8a8a] border-t border-[#2f2f2f]", "Modeling Toolkit"]].map(([h, c, t]) => (
          <div key={t} className={`${h} ${c} rounded-r-[3px] flex items-center justify-center text-[11px] leading-[14px]`}>
            <span className="whitespace-nowrap [writing-mode:vertical-rl]">{t}</span>
          </div>
        ))}
      </div>
    </div>
  );
}

const frames = Array.from({ length: 24 }, (_, i) => (i + 1) * 5);

function Timeline() {
  return (
    <div className="h-[48px] flex shrink-0 bg-[#444444] relative">
      <Grip className="ml-[2px] w-[3px] h-[36px] mt-[8px]" />
      <div className="ml-[11px] w-[1613px] shrink-0 flex overflow-hidden">
        <div className="w-[61px] shrink-0 flex flex-col">
          <div className="h-[8px]" /><div className="h-[32px] bg-[#2b2b2b]" /><div className="h-[2px] bg-[#666]" />
        </div>
        {frames.map((f) => (
          <div key={f} className="w-[66.520px] shrink-0 flex flex-col">
            <div className="h-[8px] border-l border-[#222]" />
            <div className="h-[16px] bg-[#2b2b2b] pl-[7px] text-[11px] leading-[14px] text-[#8e8e8e]">{f}</div>
            <div className="h-[16px] bg-[#2b2b2b]"><div className="h-full border-l border-[#a8a8a8]" /></div>
            <div className="h-[2px] bg-[#666]" />
            <div className="h-[6px] border-l border-[#222]" />
          </div>
        ))}
      </div>
      <div className="absolute left-[862px] top-0 bottom-0 w-[13px] bg-[#636363] flex flex-col">
        <div className="mt-[8px] h-[30px] bg-[#3b3b3b] relative"><span className="absolute left-[6px] top-[14px] text-[11px] leading-[14px] text-[#f0f0f0]">64</span></div>
      </div>
      <div className="ml-[9px] mt-[14px] w-[50px] h-[20px] bg-[#2b2b2b] rounded-[2px] text-[11px] leading-[20px] pl-[5px] text-[#c0c0c0] shrink-0">64</div>
      <div className="flex items-center ml-[5px] mt-[-1px]">
        <Slot className="w-[28px]"><I s={16}><path d="M2 4v12M9 4v12L3 10zM16 4v12l-6-6z" fill={G} stroke={G} strokeWidth=".8" /></I></Slot>
        <Slot className="w-[28px]"><I s={16}><path d="M4 3v14M16 3v14L6 10z" fill={G} stroke={G} /></I></Slot>
        <Slot className="w-[27px]"><I s={18}><path d="M4 1v18" stroke="#e07a30" strokeWidth="2" strokeDasharray="12 1" /><path d="M17 4v12L8 10z" fill={G} /></I></Slot>
        <Slot className="w-[28px]"><I s={20}><path d="M15 2v16L4 10z" fill={G} /></I></Slot>
        <Slot className="w-[28px]"><I s={20}><path d="M5 2v16l11-8z" fill={G} /></I></Slot>
        <Slot className="w-[29px]"><I s={18}><path d="M16 1v18" stroke="#e07a30" strokeWidth="2" strokeDasharray="12 1" /><path d="M3 4v12l9-6z" fill={G} /></I></Slot>
        <Slot className="w-[28px]"><I s={16}><path d="M16 3v14M4 3v14L14 10z" fill={G} stroke={G} /></I></Slot>
        <Slot className="w-[28px]"><I s={16}><path d="M18 4v12M11 4v12l6-6zM4 4v12l6-6z" fill={G} stroke={G} strokeWidth=".8" /></I></Slot>
      </div>
    </div>
  );
}

function RangeRow() {
  return (
    <div className="h-[38px] pt-[1px] flex items-center shrink-0 border-t-2 border-[#3c3c3c] bg-[#444444]">
      <Grip className="ml-[2px] w-[3px] h-[28px]" />
      <div className="ml-[12px] w-[50px] h-[20px] bg-[#2b2b2b] rounded-[2px] text-[11px] leading-[20px] pl-[6px] text-[#b0a0a8] shrink-0">1</div>
      <div className="ml-[9px] w-[1089px] h-[20px] bg-[#2b2b2b] rounded-[2px] flex items-center pl-[2px] shrink-0">
        <div className="w-[662px] h-[16px] bg-[#444444] flex items-center relative text-[11px] text-[#c0c0c0]">
          <div className="w-[8px] h-full bg-[#a5a5a5]" />
          <span className="ml-[8px]">1</span>
          <div className="absolute left-[330px] top-[4px] w-[3px] h-[9px] border-l border-r border-dotted border-[#999]" />
          <span className="ml-auto mr-[15px]">120</span>
          <div className="w-[8px] h-full bg-[#a5a5a5]" />
        </div>
      </div>
      <div className="ml-[10px] w-[50px] h-[20px] bg-[#2b2b2b] rounded-[2px] text-[11px] leading-[20px] pl-[5px] text-[#c0c0c0] shrink-0">200</div>
      <Slot className="w-[42px]"><Handle h="h-[20px]" /></Slot>
      <Slot className="w-[22px]"><svg width="12" height="22" viewBox="0 0 12 22"><path d="M1 3h7v18l-3.500-4L1 21z" fill="#e06a33" /><path d="M9 1v8M5.500 4.500h7" stroke="#eee" strokeWidth="1.500" /></svg></Slot>
      <Slot className="w-[42px]"><Handle h="h-[20px]" /></Slot>
      <Slot className="w-[18px]"><svg width="10" height="9" viewBox="0 0 10 9"><path d="M1 1h8L5 8z" fill="none" stroke="#a0a0a0" /></svg></Slot>
      <div className="ml-[3px] w-[102px] h-[20px] rounded-[2px] border border-[#555] flex items-center pl-[5px] text-[11px] text-[#c0c0c0] shrink-0">No Character Set</div>
      <Slot className="w-[30px]"><svg width="10" height="9" viewBox="0 0 10 9"><path d="M1 1h8L5 8z" fill="none" stroke="#a0a0a0" /></svg></Slot>
      <div className="w-[102px] h-[20px] rounded-[2px] border border-[#555] flex items-center pl-[5px] text-[11px] text-[#c0c0c0] shrink-0">No Anim Layer</div>
      <Slot className="w-[42px]"><Handle h="h-[20px]" /></Slot>
      <div className="ml-[3px] w-[95px] h-[20px] bg-[#5d5d5d] rounded-[2px] flex items-center text-[11px] text-[#c6c6c6] shrink-0">
        <span className="flex-1 pl-[3px]">24 fps</span>
        <div className="w-[20px] h-full border-l border-[#444] flex items-center justify-center"><Down c="#d0d0d0" /></div>
      </div>
      <Slot className="w-[44px]"><I s={18}><path d="M3 10V8a3 3 0 0 1 3-3h9M12 2l4 3-4 3M17 10v2a3 3 0 0 1-3 3H5M8 12l-4 3 4 3" stroke={G} strokeWidth="1.800" fill="none" /></I></Slot>
      <div className="w-[24px] h-[23px] bg-[#5285a6] flex items-center justify-center shrink-0"><I s={20}><rect x="3" y="5" width="13" height="13" fill="none" stroke="#e0762e" strokeWidth="1.600" /><path d="M6 9v7M10 9v7M13 9v7" stroke="#e0762e" strokeWidth="2" /><path d="M9 1h8l2 2v2H9z" fill={G} /></I></div>
      <Slot className="w-[38px]"><Handle h="h-[20px]" /></Slot>
      <Slot className="w-[26px]"><I s={18}><path d="M1 7h4l6-5v16l-6-5H1z" fill={G} /><path d="M14 5c2 3 2 7 0 10M17 3c2 4 2 10 0 14" stroke={G} fill="none" /></I></Slot>
      <Slot className="w-[32px]"><I s={18}><circle cx="10" cy="10" r="8" fill="none" stroke="#9c9c9c" strokeWidth="1.400" strokeDasharray="10 2" /><path d="M10 5v10M6 10h8" stroke="#e0762e" strokeWidth="1.400" /></I></Slot>
      <Slot className="w-[28px]"><I s={20}><circle cx="4" cy="3" r="2" fill="none" stroke={G} /><circle cx="12" cy="6" r="2" fill="#e0762e" /><path d="M10 8 6 13l5 2-2 4M10 8l5 3 3-1M7 12l-4 3" stroke="#e0762e" strokeWidth="1.800" fill="none" /></I></Slot>
    </div>
  );
}

export default function App() {
  return (
    <div className="w-[1920px] h-[991px] overflow-hidden bg-[#444444] flex flex-col font-['Open_Sans','Liberation_Sans',sans-serif]">
      <TitleBar />
      <MenuBar />
      <Toolbar />
      <Shelf />
      <div className="h-[737px] flex shrink-0 min-h-0">
        <Toolbox />
        <Outliner />
        <Viewport />
        <RightPanel />
      </div>
      <Timeline />
      <RangeRow />
      <div className="flex-1 flex items-center bg-[#444444] border-t border-[#3c3c3c]">
        <div className="w-[816px] h-full border-r-2 border-[#3a3a3a]" />
      </div>
    </div>
  );
}
